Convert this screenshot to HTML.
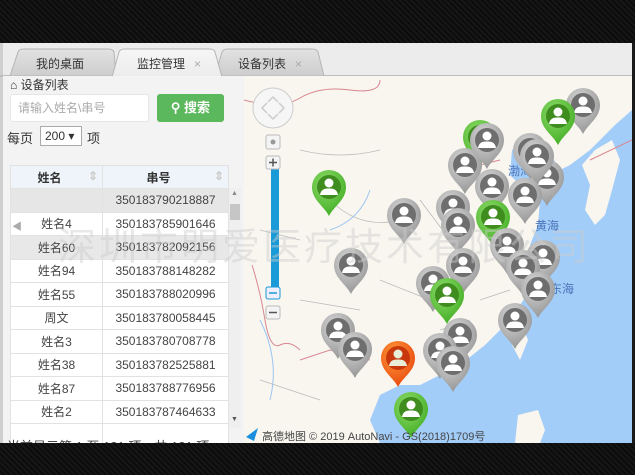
<!DOCTYPE html>
<html><head><meta charset="utf-8"><style>
*{margin:0;padding:0;box-sizing:border-box}
body{width:635px;height:475px;overflow:hidden;background:#111;font-family:"Liberation Sans","Noto Sans CJK SC",sans-serif;position:relative;font-size:12px;color:#333}
.abs{position:absolute}
#top{left:0;top:0;width:635px;height:43px;background:repeating-linear-gradient(45deg,#161616 0 2px,#0c0c0c 2px 4px)}
#bot{left:0;top:443px;width:635px;height:32px;background:repeating-linear-gradient(45deg,#161616 0 2px,#0c0c0c 2px 4px)}
#main{left:0;top:43px;width:632px;height:400px;background:#ececec}
#strip{left:0;top:43px;width:3px;height:400px;background:#cfcfcf}
#left{left:3px;top:76px;width:241px;height:367px;background:#f3f3f3;overflow:hidden}
table{border-collapse:collapse;position:absolute;left:7px;top:89px;width:219px}
td{height:23.5px;border:1px solid #e2e2e2;background:#fff;text-align:center;font-size:12px;color:#444}
th{height:23px;background:#eef4f9;border:1px solid #e2e2e2;font-size:12px;color:#333;font-weight:bold}
</style></head><body>
<div id="top" class="abs"></div>
<div id="main" class="abs"></div>
<div id="strip" class="abs"></div>
<svg class="abs" style="left:0;top:43px" width="632" height="34">
<defs><linearGradient id="tg" x1="0" y1="0" x2="0" y2="1"><stop offset="0" stop-color="#e2e2e2"/><stop offset="1" stop-color="#cdcdcd"/></linearGradient>
<linearGradient id="ta" x1="0" y1="0" x2="0" y2="1"><stop offset="0" stop-color="#f6f6f6"/><stop offset="1" stop-color="#ececec"/></linearGradient></defs>
<rect x="0" y="32" width="632" height="2" fill="#bdbdbd"/>
<path d="M10 33 L18 9 Q19 6 24 6 L108 6 Q113 6 114 9 L116 33Z" fill="url(#tg)" stroke="#b5b5b5"/>
<path d="M215 33 L222 9 Q223 6 228 6 L312 6 Q317 6 318 9 L324 33Z" fill="url(#tg)" stroke="#b5b5b5"/>
<path d="M112 34 L119 9 Q120 6 125 6 L210 6 Q214 6 215 9 L222 34Z" fill="url(#ta)" stroke="#b5b5b5"/>
<text x="36" y="25" font-size="12" fill="#333" font-family="Liberation Sans,Noto Sans CJK SC,sans-serif">我的桌面</text>
<text x="137" y="25" font-size="12" fill="#333" font-family="Liberation Sans,Noto Sans CJK SC,sans-serif">监控管理</text>
<text x="194" y="25" font-size="12" fill="#aaa">×</text>
<text x="238" y="25" font-size="12" fill="#333" font-family="Liberation Sans,Noto Sans CJK SC,sans-serif">设备列表</text>
<text x="295" y="25" font-size="12" fill="#aaa">×</text>
</svg>
<div id="left" class="abs">
<div class="abs" style="left:7px;top:0;font-size:12px;color:#333">&#8962; 设备列表</div>
<div class="abs" style="left:7px;top:18px;width:139px;height:28px;background:#fff;border:1px solid #e6e6e6;border-radius:3px;color:#aaa;font-size:12px;line-height:26px;padding-left:7px">请输入姓名\串号</div>
<div class="abs" style="left:154px;top:18px;width:67px;height:28px;background:#5cb85c;border-radius:3px;color:#fff;font-weight:bold;font-size:13px;line-height:28px;text-align:center">&#9906; 搜索</div>
<div class="abs" style="left:4px;top:52px;font-size:13px">每页</div>
<div class="abs" style="left:37px;top:50px;width:42px;height:20px;background:#fff;border:1px solid #aaa;font-size:12px;line-height:18px;padding-left:4px">200 ▾</div>
<div class="abs" style="left:84px;top:52px;font-size:13px">项</div>
<table>
<tr><th style="width:92px">姓名 <span style="color:#ccc;float:right;margin-right:4px">⇕</span></th><th>串号 <span style="color:#ccc;float:right;margin-right:4px">⇕</span></th></tr>
<tr><td style="background:#e6e6e6"></td><td style="background:#e6e6e6">350183790218887</td></tr>
<tr><td>姓名4</td><td>350183785901646</td></tr>
<tr><td style="background:#e8e8e8">姓名60</td><td style="background:#e8e8e8">350183782092156</td></tr>
<tr><td>姓名94</td><td>350183788148282</td></tr>
<tr><td>姓名55</td><td>350183788020996</td></tr>
<tr><td>周文</td><td>350183780058445</td></tr>
<tr><td>姓名3</td><td>350183780708778</td></tr>
<tr><td>姓名38</td><td>350183782525881</td></tr>
<tr><td>姓名87</td><td>350183788776956</td></tr>
<tr><td>姓名2</td><td>350183787464633</td></tr>
<tr><td></td><td></td></tr>
</table>
<div class="abs" style="left:226px;top:112px;width:12px;height:240px;background:#efefef"></div>
<div class="abs" style="left:227px;top:128px;width:10px;height:16px;background:#c6c6c6"></div>
<div class="abs" style="left:228px;top:114px;font-size:7px;color:#888">▲</div>
<div class="abs" style="left:228px;top:340px;font-size:7px;color:#555">▼</div>
<div class="abs" style="left:9px;top:142px;font-size:10px;color:#aaa">◀</div>
<div class="abs" style="left:4px;top:360px;font-size:13px;color:#444;white-space:nowrap">当前显示第 1 至 181 项，共 181 项</div>
</div>
<svg class="abs" style="left:244px;top:76px" width="388" height="367" viewBox="244 76 388 367">
<defs>
<radialGradient id="gg" cx="0.4" cy="0.3" r="0.8"><stop offset="0" stop-color="#d8d8d8"/><stop offset="1" stop-color="#8e8e8e"/></radialGradient>
<radialGradient id="gr" cx="0.4" cy="0.3" r="0.8"><stop offset="0" stop-color="#8fdc6a"/><stop offset="1" stop-color="#3aa91d"/></radialGradient>
<radialGradient id="go" cx="0.4" cy="0.3" r="0.8"><stop offset="0" stop-color="#ff9a3a"/><stop offset="1" stop-color="#e6400a"/></radialGradient>
<symbol id="pg" viewBox="0 0 34 46"><path d="M17 46C12 36 0 30 0 17A17 17 0 0 1 34 17C34 30 22 36 17 46Z" fill="url(#gg)"/><circle cx="17" cy="17" r="12" fill="#6e6e6e"/><circle cx="17" cy="13" r="4.5" fill="#fff"/><path d="M8 25Q9 18 17 18.5Q25 18 26 25Z" fill="#fff"/></symbol>
<symbol id="pn" viewBox="0 0 34 46"><path d="M17 46C12 36 0 30 0 17A17 17 0 0 1 34 17C34 30 22 36 17 46Z" fill="url(#gr)"/><circle cx="17" cy="17" r="12" fill="#3f8c1f"/><circle cx="17" cy="13" r="4.5" fill="#fff"/><path d="M8 25Q9 18 17 18.5Q25 18 26 25Z" fill="#fff"/></symbol>
<symbol id="po" viewBox="0 0 34 46"><path d="M17 46C12 36 0 30 0 17A17 17 0 0 1 34 17C34 30 22 36 17 46Z" fill="url(#go)"/><circle cx="17" cy="17" r="12" fill="#c8380c"/><circle cx="17" cy="13" r="4.5" fill="#e8eed8"/><path d="M8 25Q9 18 17 18.5Q25 18 26 25Z" fill="#e8eed8"/></symbol>
</defs>
<rect x="244" y="76" width="388" height="367" fill="#f8f6ef"/>
<path d="M632 110 L615 125 600 140 590 150 570 165 560 170 548 150 530 140 512 150 510 175 525 190 540 200 538 225 530 245 540 265 530 290 510 320 485 345 460 365 440 375 420 385 400 385 380 395 370 420 380 443 632 443Z" fill="#a3cdf9"/>
<path d="M595 150 L612 140 620 160 612 190 605 215 595 225 585 210 590 185 582 165Z" fill="#f8f6ef"/>
<path d="M520 320 L528 340 520 360 512 345Z" fill="#f8f6ef"/>
<path d="M518 415 L538 410 545 430 540 443 515 443Z" fill="#f8f6ef"/>
<path d="M244 100 Q280 110 300 98 T350 90 380 80 M460 170 L500 160 M590 160 L632 140" stroke="#d9868f" fill="none" stroke-width="1"/>
<path d="M252 265 Q260 290 265 320 T280 345 300 350 M300 360 L330 350 370 360" stroke="#d9868f" fill="none" stroke-width="1"/>
<path d="M300 150 Q340 160 380 150 M330 200 Q360 230 400 220 M260 230 L300 240 M380 280 L430 300 M300 300 L360 310 M420 200 L450 240 M480 300 L510 290 M260 380 L320 400 M440 330 L470 320" stroke="#bbb" fill="none" stroke-width="0.8"/>
<path d="M370 190 Q360 220 330 230 M260 320 Q280 360 270 400" stroke="#9cc4f2" fill="none"/>
<text x="508" y="175" font-size="12" fill="#4a74b8" font-family="Liberation Sans,Noto Sans CJK SC,sans-serif">渤海</text>
<text x="535" y="230" font-size="12" fill="#4a74b8" font-family="Liberation Sans,Noto Sans CJK SC,sans-serif">黄海</text>
<text x="550" y="293" font-size="12" fill="#4a74b8" font-family="Liberation Sans,Noto Sans CJK SC,sans-serif">东海</text>
<use href="#pg" x="566" y="88" width="34" height="46"/>
<use href="#pn" x="541" y="99" width="34" height="46"/>
<use href="#pn" x="463" y="120" width="34" height="46"/>
<use href="#pg" x="530" y="160" width="34" height="46"/>
<use href="#pg" x="513" y="133" width="34" height="46"/>
<use href="#pg" x="520" y="139" width="34" height="46"/>
<use href="#pg" x="448" y="148" width="34" height="46"/>
<use href="#pg" x="470" y="123" width="34" height="46"/>
<use href="#pg" x="475" y="169" width="34" height="46"/>
<use href="#pg" x="508" y="178" width="34" height="46"/>
<use href="#pn" x="476" y="200" width="34" height="46"/>
<use href="#pg" x="387" y="198" width="34" height="46"/>
<use href="#pg" x="436" y="190" width="34" height="46"/>
<use href="#pg" x="441" y="208" width="34" height="46"/>
<use href="#pn" x="312" y="170" width="34" height="46"/>
<use href="#pg" x="526" y="240" width="34" height="46"/>
<use href="#pg" x="490" y="228" width="34" height="46"/>
<use href="#pg" x="506" y="250" width="34" height="46"/>
<use href="#pg" x="521" y="272" width="34" height="46"/>
<use href="#pg" x="446" y="248" width="34" height="46"/>
<use href="#pg" x="334" y="248" width="34" height="46"/>
<use href="#pg" x="416" y="266" width="34" height="46"/>
<use href="#pn" x="430" y="278" width="34" height="46"/>
<use href="#pg" x="498" y="303" width="34" height="46"/>
<use href="#pg" x="321" y="313" width="34" height="46"/>
<use href="#pg" x="338" y="332" width="34" height="46"/>
<use href="#pg" x="443" y="318" width="34" height="46"/>
<use href="#pg" x="423" y="333" width="34" height="46"/>
<use href="#pg" x="436" y="346" width="34" height="46"/>
<use href="#po" x="381" y="341" width="34" height="46"/>
<use href="#pn" x="394" y="392" width="34" height="46"/>
<circle cx="273" cy="108" r="20" fill="#f6f6f6" stroke="#ccc"/>
<path d="M268 102l5-5 5 5M268 114l5 5 5-5M267 103l-5 5 5 5M279 103l5 5-5 5" stroke="#ccc" fill="none" stroke-width="1.5"/>
<rect x="266" y="135" width="14" height="14" rx="2" fill="#f4f4f4" stroke="#bbb"/><circle cx="273" cy="142" r="2.5" fill="#999"/>
<rect x="271" y="168" width="8" height="122" fill="#1a9ad6"/>
<rect x="266" y="156" width="14" height="13" rx="2" fill="#f4f4f4" stroke="#bbb"/><path d="M269 162.5h8M273 158.5v8" stroke="#555" stroke-width="1.5"/>
<rect x="266" y="287" width="14" height="12" rx="2" fill="#eef" stroke="#1a9ad6"/><path d="M269 293h8" stroke="#1a9ad6" stroke-width="1.5"/>
<rect x="266" y="306" width="14" height="13" rx="2" fill="#f4f4f4" stroke="#bbb"/><path d="M269 312.5h8" stroke="#555" stroke-width="1.5"/>
<path d="M246 437 L258 428 254 441Z" fill="#1a8fe0"/>
<text x="262" y="440" font-size="11" fill="#444" font-family="Liberation Sans,Noto Sans CJK SC,sans-serif">高德地图 © 2019 AutoNavi - GS(2018)1709号</text>
</svg>
<div class="abs" style="left:58px;top:216px;font-size:38px;color:rgba(205,205,205,0.45);white-space:nowrap;letter-spacing:3px;font-family:'Liberation Sans','Noto Sans CJK SC',sans-serif">深圳市明爱医疗技术有限公司</div>
<div id="bot" class="abs"></div>
<div class="abs" style="left:632px;top:43px;width:3px;height:400px;background:#1a1a1a"></div>
</body></html>
